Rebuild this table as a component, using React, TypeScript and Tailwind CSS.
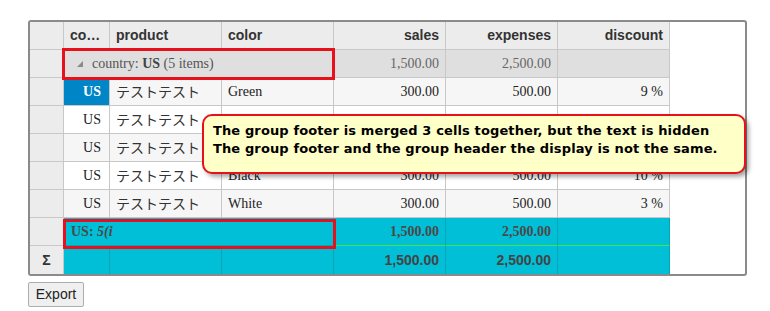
import React from "react";

type Row = { color: string; sales: string; expenses: string; discount: string };

const rows: Row[] = [
  { color: "Green", sales: "300.00", expenses: "500.00", discount: "9 %" },
  { color: "Red", sales: "300.00", expenses: "500.00", discount: "5 %" },
  { color: "Blue", sales: "300.00", expenses: "500.00", discount: "8 %" },
  { color: "Black", sales: "300.00", expenses: "500.00", discount: "10 %" },
  { color: "White", sales: "300.00", expenses: "500.00", discount: "3 %" },
];

const cell =
  "h-full flex items-center shrink-0 border-r border-b px-[6px] overflow-hidden whitespace-nowrap";
const gray = "border-[#c8c8c8]";
const teal = "border-[#0aa3b3]";
const serif = "font-['Liberation_Serif',serif] text-[14px]";
const sans = "font-['Liberation_Sans',Arial,sans-serif] text-[14px]";
const jp = "font-['Noto_Sans_CJK_JP',sans-serif] text-[14px]";

function RowHead({ children }: { children?: React.ReactNode }) {
  return (
    <div className={`${cell} ${gray} w-[34px] justify-center bg-[#ececec] text-[#333] font-bold ${sans}`}>
      {children}
    </div>
  );
}

export default function App() {
  return (
    <div className="relative w-[770px] h-[311px] bg-white overflow-hidden">
      <div className="ml-[28px] mt-[20px] w-[719px] border-2 border-[#8a8a8a] rounded-[3px] overflow-hidden bg-white">
        {/* column headers */}
        <div className={`flex h-[28px] ${sans} font-bold text-[#333]`}>
          <RowHead />
          <div className={`${cell} ${gray} w-[46px] bg-[#ececec]`}>
            <span className="truncate">country</span>
          </div>
          <div className={`${cell} ${gray} w-[112px] bg-[#ececec]`}>product</div>
          <div className={`${cell} ${gray} w-[112px] bg-[#ececec]`}>color</div>
          <div className={`${cell} ${gray} w-[112px] bg-[#ececec] justify-end`}>sales</div>
          <div className={`${cell} ${gray} w-[112px] bg-[#ececec] justify-end`}>expenses</div>
          <div className={`${cell} ${gray} w-[112px] bg-[#ececec] justify-end`}>discount</div>
        </div>

        {/* group header */}
        <div className={`flex h-[28px] ${serif}`}>
          <RowHead />
          <div className={`${cell} ${gray} w-[270px] bg-[#dfdfdf] text-[#555] pl-[13px]`}>
            <svg width="6" height="6" viewBox="0 0 6 6" className="mr-[9px] mt-[1px]">
              <polygon points="6,0 6,6 0,6" fill="#8a8a8a" />
            </svg>
            <span>
              country: <b className="text-[#444]">US</b> (5 items)
            </span>
          </div>
          <div className={`${cell} ${gray} w-[112px] bg-[#dfdfdf] justify-end text-[#666]`}>1,500.00</div>
          <div className={`${cell} ${gray} w-[112px] bg-[#dfdfdf] justify-end text-[#666]`}>2,500.00</div>
          <div className={`${cell} ${gray} w-[112px] bg-[#dfdfdf]`} />
        </div>

        {/* data rows */}
        {rows.map((r, i) => {
          const bg = i % 2 === 0 ? "bg-[#f6f6f6]" : "bg-white";
          const selected = i === 0;
          return (
            <div key={i} className={`flex h-[28px] ${serif} text-[#222]`}>
              <RowHead />
              <div
                className={`${cell} ${gray} w-[46px] justify-end pr-[8px] ${
                  selected ? "bg-[#0085c7] text-white font-bold" : bg
                }`}
              >
                US
              </div>
              <div className={`${cell} ${gray} w-[112px] ${bg}`}>
                <span className={`${jp} text-[#333]`}>テストテスト</span>
              </div>
              <div className={`${cell} ${gray} w-[112px] ${bg}`}>{r.color}</div>
              <div className={`${cell} ${gray} w-[112px] ${bg} justify-end`}>{r.sales}</div>
              <div className={`${cell} ${gray} w-[112px] ${bg} justify-end`}>{r.expenses}</div>
              <div className={`${cell} ${gray} w-[112px] ${bg} justify-end`}>{r.discount}</div>
            </div>
          );
        })}

        {/* group footer */}
        <div className={`flex h-[28px] ${serif} font-bold text-[#4a4a4a]`}>
          <RowHead />
          <div className={`${cell} ${teal} w-[270px] bg-[#00bfd6] pl-[7px]`}>
            <span>
              US: <i>5(i</i>
            </span>
          </div>
          <div className={`${cell} ${teal} border-b-[#44e544] w-[112px] bg-[#00bfd6] justify-end`}>1,500.00</div>
          <div className={`${cell} ${teal} border-b-[#44e544] w-[112px] bg-[#00bfd6] justify-end`}>2,500.00</div>
          <div className={`${cell} ${teal} border-b-[#44e544] w-[112px] bg-[#00bfd6]`} />
        </div>

        {/* totals */}
        <div className={`flex h-[28px] ${sans} font-bold text-[#444]`}>
          <div className={`${cell} ${gray} border-b-0 w-[34px] justify-center bg-[#ececec] text-[#333]`}>Σ</div>
          <div className={`${cell} ${teal} border-b-0 w-[46px] bg-[#00bfd6]`} />
          <div className={`${cell} ${teal} border-b-0 w-[112px] bg-[#00bfd6]`} />
          <div className={`${cell} ${teal} border-b-0 w-[112px] bg-[#00bfd6]`} />
          <div className={`${cell} ${teal} border-b-0 w-[112px] bg-[#00bfd6] justify-end`}>1,500.00</div>
          <div className={`${cell} ${teal} border-b-0 w-[112px] bg-[#00bfd6] justify-end`}>2,500.00</div>
          <div className={`${cell} ${teal} border-b-0 w-[112px] bg-[#00bfd6]`} />
        </div>
      </div>

      <button
        className={`ml-[28px] mt-[6px] w-[56px] h-[25px] border border-[#adadad] rounded-[2px] bg-[#efefef] text-[#222] ${sans} flex items-center justify-center`}
      >
        Export
      </button>

      {/* annotation frames */}
      <div className="absolute left-[62px] top-[48px] w-[273px] h-[32px] border-[3px] border-[#e8101a]" />
      <div className="absolute left-[63px] top-[219px] w-[273px] h-[30px] border-[3px] border-[#e8101a]" />

      {/* annotation callout */}
      <div className="absolute left-[202px] top-[114px] w-[544px] h-[60px] rounded-[10px] border-2 border-[#e8101a] bg-[#ffffc8] shadow-[3px_3px_4px_rgba(0,0,0,0.35)] pl-[9px] pt-[6px] font-['DejaVu_Sans',Verdana,sans-serif] font-bold text-[13px] tracking-[0.12px] leading-[18px] text-black whitespace-nowrap">
        <div>The group footer is merged 3 cells together, but the text is hidden</div>
        <div>The group footer and the group header the display is not the same.</div>
      </div>
    </div>
  );
}
